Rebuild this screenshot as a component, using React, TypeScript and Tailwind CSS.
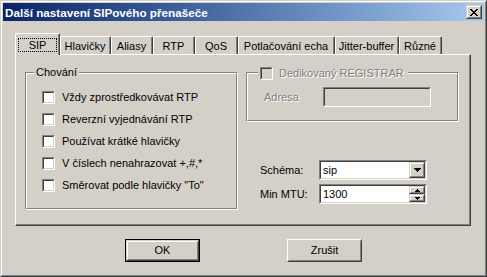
import React from "react";

function Check({ disabled }: { disabled?: boolean }) {
  return (
    <div className="w-[13px] h-[13px] shrink-0 border border-t-[#808080] border-l-[#808080] border-r-white border-b-white">
      <div
        className={
          disabled
            ? "w-full h-full border border-t-[#404040] border-l-[#404040] border-r-[#d4d0c8] border-b-[#d4d0c8] bg-[#d4d0c8]"
            : "w-full h-full border border-t-[#404040] border-l-[#404040] border-r-[#d4d0c8] border-b-[#d4d0c8] bg-white"
        }
      />
    </div>
  );
}

function Raised({ className, children }: { className?: string; children?: React.ReactNode }) {
  return (
    <div className={"border border-t-[#d4d0c8] border-l-[#d4d0c8] border-r-[#404040] border-b-[#404040] bg-[#d4d0c8] " + (className ?? "")}>
      <div className="w-full h-full border border-t-white border-l-white border-r-[#808080] border-b-[#808080] flex items-center justify-center">
        {children}
      </div>
    </div>
  );
}

function Sunken({ className, children, disabled }: { className?: string; children?: React.ReactNode; disabled?: boolean }) {
  return (
    <div className={"border border-t-[#808080] border-l-[#808080] border-r-white border-b-white " + (className ?? "")}>
      <div
        className={
          disabled
            ? "w-full h-full border border-t-[#404040] border-l-[#404040] border-r-[#d4d0c8] border-b-[#d4d0c8] bg-[#d4d0c8] flex items-center"
            : "w-full h-full border border-t-[#404040] border-l-[#404040] border-r-[#d4d0c8] border-b-[#d4d0c8] bg-white flex items-center"
        }
      >
        {children}
      </div>
    </div>
  );
}

function DownArrow() {
  return (
    <svg width="7" height="4" viewBox="0 0 7 4" shapeRendering="crispEdges">
      <rect x="0" y="0" width="7" height="1" fill="#000" />
      <rect x="1" y="1" width="5" height="1" fill="#000" />
      <rect x="2" y="2" width="3" height="1" fill="#000" />
      <rect x="3" y="3" width="1" height="1" fill="#000" />
    </svg>
  );
}

function SmallArrow({ up }: { up?: boolean }) {
  return (
    <svg width="5" height="3" viewBox="0 0 5 3" shapeRendering="crispEdges">
      {up ? (
        <>
          <rect x="2" y="0" width="1" height="1" fill="#000" />
          <rect x="1" y="1" width="3" height="1" fill="#000" />
          <rect x="0" y="2" width="5" height="1" fill="#000" />
        </>
      ) : (
        <>
          <rect x="0" y="0" width="5" height="1" fill="#000" />
          <rect x="1" y="1" width="3" height="1" fill="#000" />
          <rect x="2" y="2" width="1" height="1" fill="#000" />
        </>
      )}
    </svg>
  );
}

function CloseGlyph() {
  const cells: [number, number, number][] = [
    [0, 0, 2], [6, 0, 2],
    [1, 1, 2], [5, 1, 2],
    [2, 2, 4],
    [3, 3, 2],
    [2, 4, 4],
    [1, 5, 2], [5, 5, 2],
    [0, 6, 2], [6, 6, 2],
  ];
  return (
    <svg width="8" height="7" viewBox="0 0 8 7" shapeRendering="crispEdges">
      {cells.map(([x, y, w], i) => (
        <rect key={i} x={x} y={y} width={w} height={1} fill="#000" />
      ))}
    </svg>
  );
}

const tabs: { label: string; w: string }[] = [
  { label: "Hlavičky", w: "w-[51px]" },
  { label: "Aliasy", w: "w-[42px]" },
  { label: "RTP", w: "w-[42px]" },
  { label: "QoS", w: "w-[43px]" },
  { label: "Potlačování echa", w: "w-[97px]" },
  { label: "Jitter-buffer", w: "w-[64px]" },
  { label: "Různé", w: "w-[43px]" },
];

const options = [
  "Vždy zprostředkovávat RTP",
  "Reverzní vyjednávání RTP",
  "Používat krátké hlavičky",
  "V číslech nenahrazovat +,#,*",
  "Směrovat podle hlavičky \"To\"",
];

export default function App() {
  return (
    <div className="w-[487px] h-[277px] bg-[#d4d0c8] border border-t-[#d4d0c8] border-l-[#d4d0c8] border-r-[#404040] border-b-[#404040] font-['Liberation_Sans',Arial,sans-serif] text-[11px] leading-[13px] text-black select-none">
      <div className="w-full h-full border border-t-white border-l-white border-r-[#808080] border-b-[#808080] p-px flex flex-col">
        {/* Title bar */}
        <div className="h-[18px] shrink-0 flex items-center bg-linear-to-r from-[#0a246a] to-[#a6caf0] pl-[2px] pr-[2px]">
          <span className="flex-1 text-white font-bold text-[11.7px]">Další nastavení SIPového přenašeče</span>
          <Raised className="w-[16px] h-[14px]">
            <CloseGlyph />
          </Raised>
        </div>

        {/* Tabs */}
        <div className="mt-[12px] ml-[12px] h-[21px] flex items-end">
          <div className="relative z-10 w-[45px] h-[22px] -mb-px bg-[#d4d0c8] border-t border-l border-r border-t-white border-l-white border-r-[#404040] rounded-tl-[2px] rounded-tr-[2px]">
            <div className="h-full border-r border-r-[#808080] pt-[4px] pl-[2px] pr-[1px]">
              <div className="h-[14px] border border-dotted border-black flex items-center justify-center">SIP</div>
            </div>
          </div>
          {tabs.map((t) => (
            <div
              key={t.label}
              className={t.w + " h-[18px] bg-[#d4d0c8] border-t border-l border-r border-t-white border-l-white border-r-[#404040] rounded-tl-[2px] rounded-tr-[2px]"}
            >
              <div className="h-full border-r border-r-[#808080] flex items-center justify-center pt-[1px] whitespace-nowrap">
                {t.label}
              </div>
            </div>
          ))}
        </div>

        {/* Panel */}
        <div className="ml-[12px] w-[456px] h-[172px] border border-t-white border-l-white border-r-[#404040] border-b-[#404040]">
          <div className="w-full h-full border-r border-b border-r-[#808080] border-b-[#808080] pl-[9px] pt-[17px] flex gap-[8px]">
            {/* Left group */}
            <div className="relative w-[213px] h-[138px] border border-t-[#808080] border-l-[#808080] border-r-white border-b-white">
              <div className="h-full border border-t-white border-l-white border-r-[#808080] border-b-[#808080] pl-[15px] pt-[17px] flex flex-col gap-[9px]">
                {options.map((o) => (
                  <div key={o} className="h-[13px] flex items-center gap-[7px]">
                    <Check />
                    <span className="whitespace-nowrap">{o}</span>
                  </div>
                ))}
              </div>
              <span className="absolute left-[8px] top-[-7px] px-[2px] bg-[#d4d0c8] leading-[13px]">Chování</span>
            </div>

            {/* Right column */}
            <div className="w-[213px] flex flex-col">
              <div className="relative w-[213px] h-[50px] border border-t-[#808080] border-l-[#808080] border-r-white border-b-white">
                <div className="h-full border border-t-white border-l-white border-r-[#808080] border-b-[#808080] pl-[16px] pt-[13px]">
                  <div className="flex items-center h-[20px]">
                    <span className="w-[59px] text-[#808080] [text-shadow:1px_1px_0_#ffffff]">Adresa</span>
                    <Sunken disabled className="w-[108px] h-[20px]" />
                  </div>
                </div>
                <div className="absolute left-[11px] top-[-6px] h-[13px] flex items-center gap-[6px] pl-[2px] pr-[4px] bg-[#d4d0c8]">
                  <Check disabled />
                  <span className="whitespace-nowrap text-[#808080] [text-shadow:1px_1px_0_#ffffff]">Dedikovaný REGISTRAR</span>
                </div>
              </div>

              <div className="mt-[38px] pl-[14px] flex flex-col gap-[4px]">
                <div className="flex items-center h-[20px]">
                  <span className="w-[59px]">Schéma:</span>
                  <Sunken className="w-[108px] h-[20px]">
                    <span className="flex-1 pl-[2px]">sip</span>
                    <Raised className="w-[16px] h-full">
                      <DownArrow />
                    </Raised>
                  </Sunken>
                </div>
                <div className="flex items-center h-[20px]">
                  <span className="w-[59px]">Min MTU:</span>
                  <Sunken className="w-[108px] h-[20px]">
                    <span className="flex-1 pl-[2px]">1300</span>
                    <div className="w-[16px] h-full flex flex-col">
                      <Raised className="w-[16px] h-[8px]">
                        <SmallArrow up />
                      </Raised>
                      <Raised className="w-[16px] h-[8px]">
                        <SmallArrow />
                      </Raised>
                    </div>
                  </Sunken>
                </div>
              </div>
            </div>
          </div>
        </div>

        {/* Buttons */}
        <div className="mt-[13px] ml-[122px] flex gap-[87px]">
          <div className="w-[75px] h-[23px] border border-black">
            <Raised className="w-full h-full">OK</Raised>
          </div>
          <div className="w-[75px] h-[23px] border border-t-white border-l-white border-r-[#404040] border-b-[#404040]">
            <div className="w-full h-full border border-t-[#d4d0c8] border-l-[#d4d0c8] border-r-[#808080] border-b-[#808080] flex items-center justify-center">
              Zrušit
            </div>
          </div>
        </div>
      </div>
    </div>
  );
}
